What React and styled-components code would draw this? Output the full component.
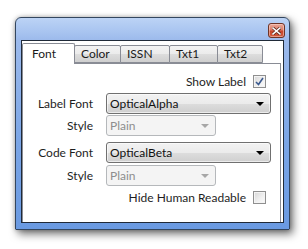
import React from 'react';
import styled, { createGlobalStyle } from 'styled-components';

const GlobalStyle = createGlobalStyle`
  body {
    margin: 0;
    background: #fff;
    font-family: Lato, "Noto Sans", sans-serif;
  }
`;

const Page = styled.div`
  padding: 17px 0 0 15px;
  height: 249px;
  box-sizing: border-box;
`;

const Window = styled.div`
  width: 275px;
  height: 213px;
  box-sizing: border-box;
  border: 1px solid #33465f;
  border-radius: 6px 6px 1px 1px;
  background: linear-gradient(180deg, #bcd3f5 0px, #a8c4f0 14px, #9cbaec 22px, #7aa5e6 60%, #6a9ae2 100%);
  box-shadow: 3px 4px 9px rgba(0, 0, 0, 0.55), 0 0 4px rgba(0, 0, 0, 0.25);
  padding: 0 5px 6px 5px;
  display: flex;
  flex-direction: column;
`;

const TitleBar = styled.div`
  height: 22px;
  display: flex;
  justify-content: flex-end;
  align-items: flex-start;
  padding-top: 5px;
  box-sizing: border-box;
`;

const CloseButton = styled.div`
  width: 17px;
  height: 15px;
  box-sizing: border-box;
  margin-right: -1px;
  border: 1px solid #6e3427;
  border-radius: 3px;
  background: linear-gradient(180deg, #eba899 0%, #dc7e69 45%, #c8452b 55%, #d25b3f 100%);
  box-shadow: inset 0 0 0 1px rgba(255, 220, 210, 0.5);
  display: flex;
  align-items: center;
  justify-content: center;
`;

const Client = styled.div`
  flex: 1;
  border: 1px solid #202a38;
  background: #fff;
  display: flex;
  flex-direction: column;
  padding: 2px 2px 0 0;
`;

const TabStrip = styled.div`
  display: flex;
  align-items: flex-end;
  height: 20px;
  position: relative;
  z-index: 1;
`;

const Tab = styled.div`
  width: ${(p) => p.$w}px;
  height: ${(p) => (p.$active ? 21 : 18)}px;
  box-sizing: border-box;
  border: 1px solid #898c95;
  border-bottom: ${(p) => (p.$active ? 'none' : '1px solid #898c95')};
  margin-left: ${(p) => (p.$first ? 0 : -1)}px;
  margin-bottom: ${(p) => (p.$active ? -1 : 0)}px;
  background: ${(p) => (p.$active ? '#fff' : 'linear-gradient(180deg, #f3f3f3 0%, #ebebeb 50%, #dddddd 51%, #cfcfcf 100%)')};
  border-radius: 2px 2px 0 0;
  font-size: 12px;
  color: #1a1a1a;
  padding: ${(p) => (p.$active ? '2px 0 0 9px' : '0 0 0 6px')};
  line-height: 16px;
`;

const Panel = styled.div`
  flex: 1;
  border: 1px solid #898c95;
  border-bottom: none;
  display: flex;
  flex-direction: column;
  padding-right: 10px;
`;

const CheckRow = styled.div`
  display: flex;
  justify-content: flex-end;
  align-items: center;
  gap: 7px;
  height: 13px;
  margin-top: ${(p) => p.$top}px;
  padding-right: 4px;
  font-size: 12px;
  color: #1e1e1e;
`;

const CheckBox = styled.div`
  width: 13px;
  height: 13px;
  box-sizing: border-box;
  border: 1px solid #8f8f8f;
  background: linear-gradient(135deg, #d6d6d6 0%, #f1f1f1 60%, #fbfbfb 100%);
  box-shadow: inset 0 0 0 1px #f4f4f4;
  display: flex;
  align-items: center;
  justify-content: center;
`;

const FieldRow = styled.div`
  display: grid;
  grid-template-columns: 70px 1fr;
  column-gap: 13px;
  align-items: center;
  margin-top: ${(p) => p.$top}px;
  font-size: 12px;
`;

const Label = styled.div`
  text-align: right;
  color: #1e1e1e;
`;

const Combo = styled.div`
  height: 21px;
  width: ${(p) => p.$w}px;
  box-sizing: border-box;
  border: 1px solid ${(p) => (p.$disabled ? '#b5b8bb' : '#707070')};
  border-radius: 3px;
  background: ${(p) => (p.$disabled ? '#f4f4f4' : 'linear-gradient(180deg, #f2f2f2 0%, #ebebeb 50%, #dddddd 51%, #cfcfcf 100%)')};
  box-shadow: ${(p) => (p.$disabled ? 'none' : 'inset 0 0 0 1px rgba(255,255,255,0.6)')};
  color: ${(p) => (p.$disabled ? '#8d8d8d' : '#111')};
  display: flex;
  align-items: center;
  justify-content: space-between;
  padding: 0 6px 0 3px;
`;

const Arrow = styled.div`
  width: 0;
  height: 0;
  border-left: 4px solid transparent;
  border-right: 4px solid transparent;
  border-top: 4px solid ${(p) => (p.$disabled ? '#a7a7a7' : '#000')};
`;

const Field = ({ label, value, width, disabled, top }) => (
  <FieldRow $top={top}>
    <Label>{label}</Label>
    <Combo $w={width} $disabled={disabled}>
      <span>{value}</span>
      <Arrow $disabled={disabled} />
    </Combo>
  </FieldRow>
);

const tabs = [
  { name: 'Font', w: 53, active: true },
  { name: 'Color', w: 47 },
  { name: 'ISSN', w: 50 },
  { name: 'Txt1', w: 49 },
  { name: 'Txt2', w: 46 },
];

const App = () => (
  <Page>
    <GlobalStyle />
    <Window>
      <TitleBar>
        <CloseButton>
          <svg width="9" height="8" viewBox="0 0 9 8">
            <path d="M1 1 L8 7 M8 1 L1 7" stroke="#5a2318" strokeWidth="3" strokeLinecap="square" />
            <path d="M1 1 L8 7 M8 1 L1 7" stroke="#fff" strokeWidth="1.6" strokeLinecap="square" />
          </svg>
        </CloseButton>
      </TitleBar>
      <Client>
        <TabStrip>
          {tabs.map((t, i) => (
            <Tab key={t.name} $w={t.w} $active={t.active} $first={i === 0}>
              {t.name}
            </Tab>
          ))}
        </TabStrip>
        <Panel>
          <CheckRow $top={11}>
            <span>Show Label</span>
            <CheckBox>
              <svg width="9" height="9" viewBox="0 0 9 9">
                <path d="M1 5 L3.5 7.5 L8 1" fill="none" stroke="#3b5a8f" strokeWidth="1.6" />
              </svg>
            </CheckBox>
          </CheckRow>
          <Field top={5} label="Label Font" value="OpticalAlpha" width={165} />
          <Field top={1} label="Style" value="Plain" width={110} disabled />
          <Field top={6} label="Code Font" value="OpticalBeta" width={165} />
          <Field top={2} label="Style" value="Plain" width={110} disabled />
          <CheckRow $top={5}>
            <span>Hide Human Readable</span>
            <CheckBox />
          </CheckRow>
        </Panel>
      </Client>
    </Window>
  </Page>
);

export default App;
